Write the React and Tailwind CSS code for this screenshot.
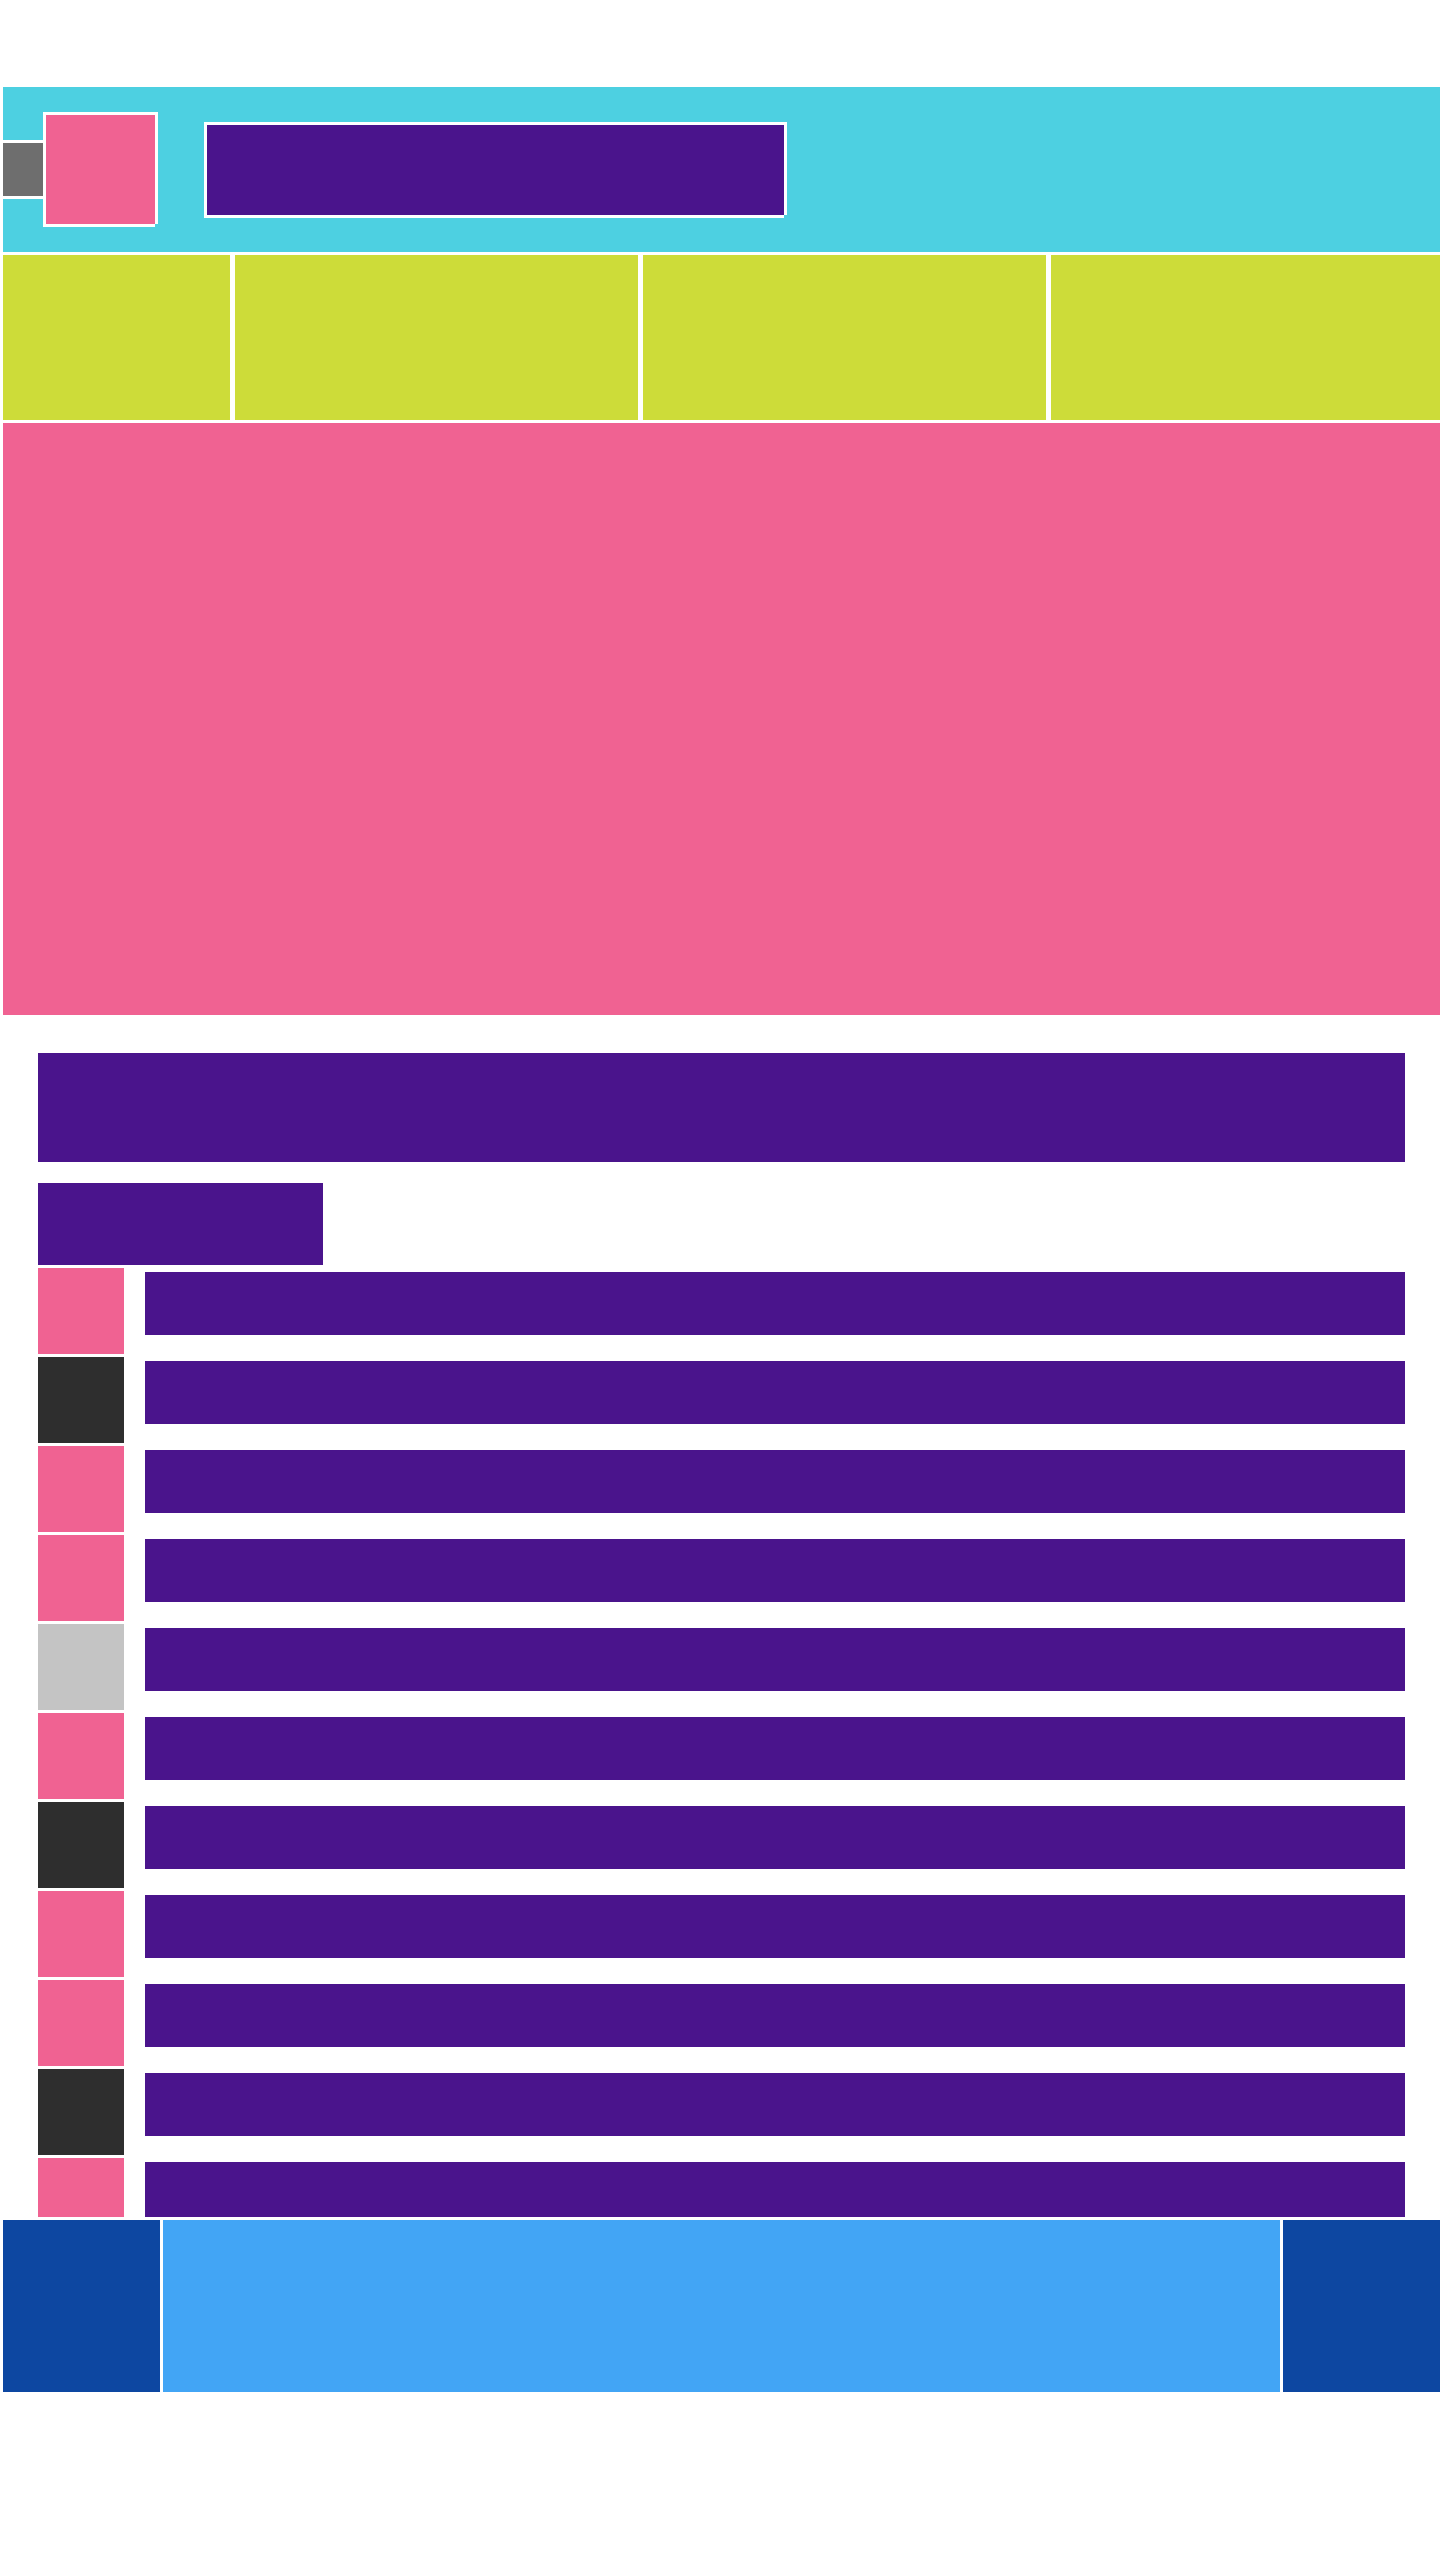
const OUTLINE =
  'shadow-[-3px_-3px_0_#fff,3px_-3px_0_#fff,-3px_3px_0_#fff,3px_0_0_#fff,0_3px_0_#fff]';

const TABS = [
  { id: 'first', width: 'w-[227px] shrink-0' },
  { id: 'second', width: 'w-[403px] shrink-0' },
  { id: 'third', width: 'w-[403px] shrink-0' },
  { id: 'fourth', width: 'min-w-0 flex-1' },
];

const PINK = 'bg-[#f06292]';
const DARK = 'bg-[#2e2e2e]';
const LIGHT = 'bg-[#c4c4c4]';

const ROWS = [PINK, DARK, PINK, PINK, LIGHT, PINK, DARK, PINK, PINK, DARK, PINK];

function Header() {
  return (
    <header className="flex h-[165px] shrink-0 items-center bg-[#4dd0e1]">
      <button
        type="button"
        aria-label="Back"
        className="h-[53px] w-10 bg-[#6e6e6e] shadow-[0_-3px_0_#fff,0_3px_0_#fff]"
      />
      <div className={`ml-[3px] size-[109px] shrink-0 ${PINK} ${OUTLINE}`} />
      <h1 className={`ml-[52px] h-[90px] w-[577px] bg-[#4a148c] ${OUTLINE}`} />
    </header>
  );
}

function Tabs() {
  return (
    <nav className="flex h-[165px] shrink-0 gap-[5px]">
      {TABS.map((tab) => (
        <button
          key={tab.id}
          type="button"
          aria-label={`${tab.id} tab`}
          className={`bg-[#cddc39] ${tab.width}`}
        />
      ))}
    </nav>
  );
}

function Row({ color }) {
  return (
    <li className="flex gap-[21px]">
      <div className={`size-[86px] shrink-0 ${color}`} />
      <div className="mt-1 h-[63px] flex-1 bg-[#4a148c]" />
    </li>
  );
}

export default function App() {
  return (
    <div className="flex h-screen flex-col gap-[3px] overflow-hidden bg-white pt-[87px] pb-[168px] pl-[3px]">
      <Header />
      <Tabs />
      <main className="min-h-0 flex-1 overflow-hidden">
        <div className={`h-[592px] ${PINK}`} />
        <section className="pt-[38px] pr-[35px] pl-[35px]">
          <h2 className="h-[109px] bg-[#4a148c]" />
          <h3 className="mt-[21px] h-[82px] w-[285px] bg-[#4a148c]" />
          <ul className="mt-[3px] flex flex-col gap-[3px]">
            {ROWS.map((color, index) => (
              <Row key={index} color={color} />
            ))}
          </ul>
        </section>
      </main>
      <footer className="flex h-[172px] shrink-0 gap-[3px]">
        <button type="button" aria-label="Previous" className="w-[157px] shrink-0 bg-[#0d47a1]" />
        <div className="flex-1 bg-[#42a5f5]" />
        <button type="button" aria-label="Next" className="w-[157px] shrink-0 bg-[#0d47a1]" />
      </footer>
    </div>
  );
}
